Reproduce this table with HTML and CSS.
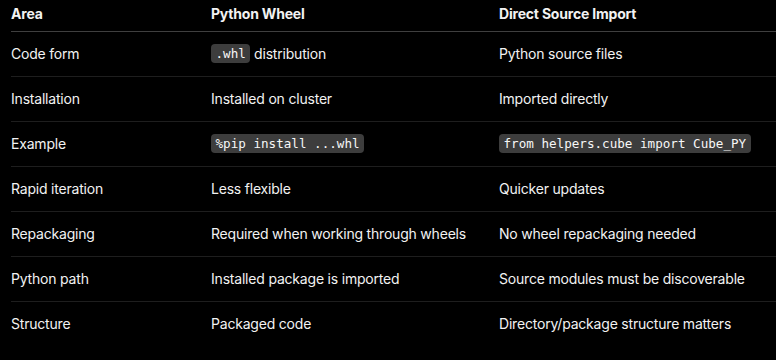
FILE: index.html
```html
<!DOCTYPE html>
<html lang="en">
<head>
<meta charset="utf-8">
<title>Python Wheel vs Direct Source Import</title>
<link rel="stylesheet" href="styles.css">
</head>
<body>
<div class="wrap">
<table class="cmp">
<thead>
<tr><th class="c1">Area</th><th class="c2">Python Wheel</th><th class="c3">Direct Source Import</th></tr>
</thead>
<tbody>
<tr><td>Code form</td><td><code>.whl</code> distribution</td><td>Python source files</td></tr>
<tr><td>Installation</td><td>Installed on cluster</td><td>Imported directly</td></tr>
<tr><td>Example</td><td><code>%pip install ...whl</code></td><td><code>from helpers.cube import Cube_PY</code></td></tr>
<tr><td>Rapid iteration</td><td>Less flexible</td><td>Quicker updates</td></tr>
<tr><td>Repackaging</td><td>Required when working through wheels</td><td>No wheel repackaging needed</td></tr>
<tr><td>Python path</td><td>Installed package is imported</td><td>Source modules must be discoverable</td></tr>
<tr><td>Structure</td><td>Packaged code</td><td>Directory/package structure matters</td></tr>
</tbody>
</table>
</div>
</body>
</html>
```
FILE: styles.css
```css
html, body {
  margin: 0;
  padding: 0;
  background: #000;
}
body {
  font-family: Inter, "Liberation Sans", Arial, sans-serif;
  font-size: 14px;
  letter-spacing: -0.2px;
  color: #f2f2f2;
}
.wrap {
  padding-left: 11px;
  overflow: hidden;
}
.cmp {
  border-collapse: collapse;
  width: 780px;
  table-layout: fixed;
}
.c1 { width: 200px; }
.c2 { width: 288px; }
.cmp th {
  text-align: left;
  font-weight: 700;
  line-height: 21px;
  padding: 3px 0 7px 0;
  border-bottom: 1px solid #3f3f3f;
}
.cmp td {
  line-height: 21px;
  padding: 11px 0 12px 0;
  border-bottom: 1px solid #1e1e1e;
  white-space: nowrap;
}
.cmp tbody tr:last-child td {
  border-bottom: none;
}
code {
  font-family: "DejaVu Sans Mono", "Liberation Mono", monospace;
  font-size: 12.6px;
  letter-spacing: 0;
  line-height: 15px;
  background: #3d3d3d;
  color: #f7f7f7;
  border-radius: 4px;
  padding: 2px 4.5px;
  display: inline-block;
  vertical-align: 1px;
}
```
